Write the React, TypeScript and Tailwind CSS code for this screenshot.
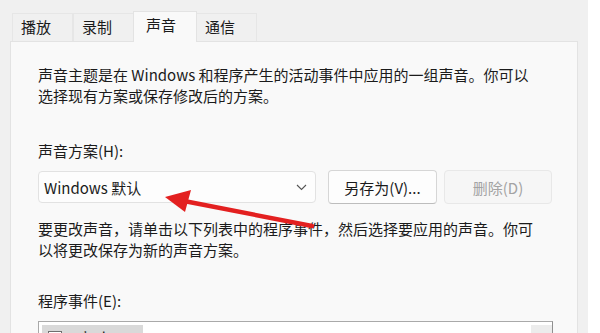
import React from "react";

const font = { fontFamily: '"Segoe UI", "Noto Sans CJK SC", "Noto Sans", sans-serif' };

function Tab({ label, active }: { label: string; active?: boolean }) {
  if (active) {
    return (
      <div className="h-[31px] w-[64px] -mb-px -mx-px z-10 border border-b-0 border-[#e3e3e3] bg-[#f9f9f9] flex items-start pt-[2px] pl-[12px] text-[15px] text-[#1a1a1a]">
        {label}
      </div>
    );
  }
  return (
    <div className="h-[28px] w-[61px] border border-b-0 border-[#e6e6e6] bg-[#f0f0f0] flex items-center pl-[8px] text-[15px] text-[#1a1a1a]">
      {label}
    </div>
  );
}

export default function App() {
  return (
    <div className="w-[600px] h-[333px] overflow-hidden bg-white flex relative" style={font}>
      <div className="w-[588px] h-full bg-[#f0f0f0] pl-[10px] pr-[10px] pt-[11px] flex flex-col">
        {/* tabs */}
        <div className="flex items-end h-[30px] pl-[2px]">
          <Tab label="播放" />
          <Tab label="录制" />
          <Tab label="声音" active />
          <Tab label="通信" />
        </div>

        {/* panel */}
        <div className="flex-1 border border-[#e3e3e3] bg-[#f9f9f9] pl-[27px] pr-[24px] pt-[22px] text-[15px] leading-[21px] text-[#1b1b1b]">
          <p>声音主题是在 Windows 和程序产生的活动事件中应用的一组声音。你可以</p>
          <p>选择现有方案或保存修改后的方案。</p>

          <div className="mt-[34px]">声音方案(H):</div>

          <div className="mt-[9px] flex items-center">
            <div className="w-[278px] h-[32px] rounded-[4px] border border-[#e2e2e2] bg-[#fdfdfd] flex items-center justify-between pl-[5px] pr-[8px]">
              <span>Windows 默认</span>
              <svg width="11" height="7" viewBox="0 0 11 7" fill="none" stroke="#555" strokeWidth="1.1">
                <path d="M1 1l4.5 4.5L10 1" />
              </svg>
            </div>
            <button className="ml-[12px] w-[109px] h-[34px] rounded-[4px] border border-[#d6d6d6] border-b-[#bdbdbd] bg-[#fdfdfd] text-[15px] text-[#1b1b1b]">
              另存为(V)...
            </button>
            <button className="ml-[7px] w-[108px] h-[34px] rounded-[4px] border border-[#e8e8e8] bg-[#f6f6f6] text-[15px] text-[#a3a3a3]">
              删除(D)
            </button>
          </div>

          <p className="mt-[14px]">要更改声音，请单击以下列表中的程序事件，然后选择要应用的声音。你可</p>
          <p>以将更改保存为新的声音方案。</p>

          <div className="mt-[30px]">程序事件(E):</div>

          <div className="mt-[10px] w-[515px] h-[40px] border border-[#a9a9a9] border-r-[#8f8f8f] bg-white flex pt-[3px] pl-[3px]">
            <div className="w-[101px] h-[30px] bg-[#d9d9d9] flex items-start pl-[6px] pt-[6px] gap-[8px]">
              <div className="w-[14px] h-[12px] border border-[#6f6f6f] bg-white" />
              <span className="leading-[14px]">Windows</span>
            </div>
            <div className="flex-1" />
            <div className="w-[21px] h-full bg-[#ececec]" />
          </div>
        </div>
      </div>

      {/* red annotation arrow */}
      <svg className="absolute left-0 top-0 pointer-events-none" width="600" height="333" viewBox="0 0 600 333">
        <path d="M312 226 L184 201" stroke="#e32020" strokeWidth="4.5" strokeLinecap="round" />
        <path d="M165 197 L191 190 L185 212 Z" fill="#e32020" />
      </svg>
    </div>
  );
}
